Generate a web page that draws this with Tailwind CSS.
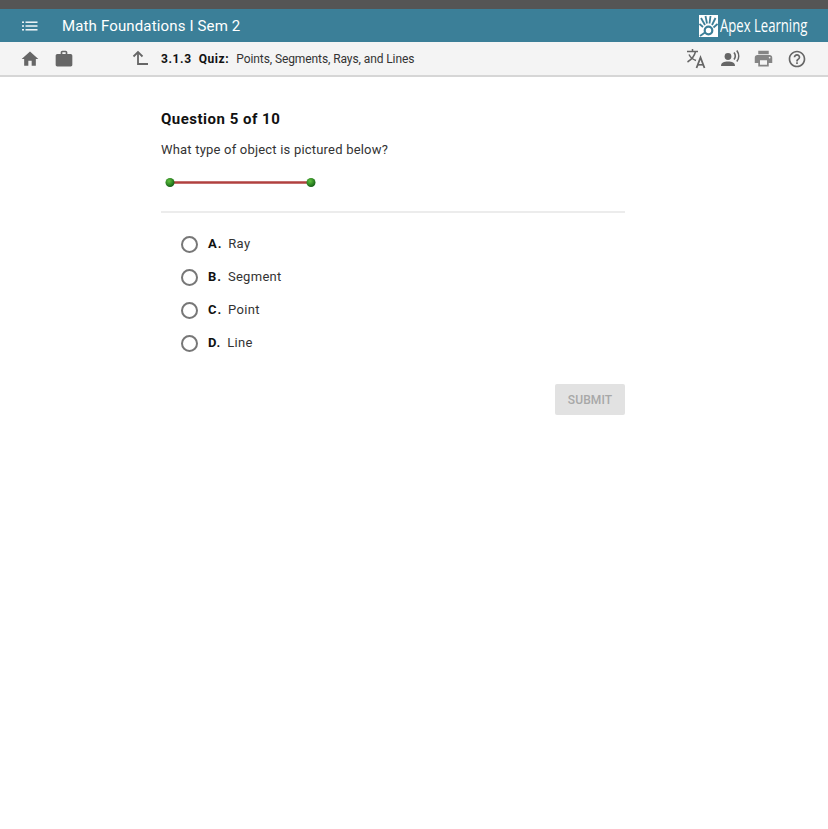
<!DOCTYPE html>
<html lang="en">
<head>
    <meta charset="UTF-8">
    <title>Math Foundations I Sem 2</title>
    <script src="https://cdn.jsdelivr.net/npm/@tailwindcss/browser@4"></script>
</head>
<body class="bg-white text-[#333] font-['Roboto',sans-serif] h-[829px] overflow-hidden">
    <div class="h-[9px] bg-[#555]"></div>

    <!-- course bar -->
    <header class="h-[33px] bg-[#3b7f98] text-white flex items-center">
        <button class="w-[60px] pl-[21px] flex">
            <svg width="18" height="18" viewBox="0 0 18 18" fill="white">
                <rect x="1" y="4.500" width="2" height="1.400"/><rect x="4.500" y="4.500" width="12" height="1.400"/>
                <rect x="1" y="8.300" width="2" height="1.400"/><rect x="4.500" y="8.300" width="12" height="1.400"/>
                <rect x="1" y="12.100" width="2" height="1.400"/><rect x="4.500" y="12.100" width="12" height="1.400"/>
            </svg>
        </button>
        <h1 class="pl-[2px] pt-[2px] text-[15px] tracking-[0.15px] font-normal">Math Foundations I Sem 2</h1>
        <div class="ml-auto mr-[20px] flex items-center">
            <svg width="19" height="22" viewBox="0 0 19 22" class="mr-[2px]">
                <rect width="19" height="22" fill="white"/>
                <g stroke="#3b7f98" stroke-width="1.800" fill="none">
                    <path d="M2 3 L6 10"/><path d="M6.500 1 L8 8.500"/><path d="M11.500 1 L10.500 8.500"/><path d="M16.500 3 L13 10"/><path d="M18.500 9 L14.500 12.500"/><path d="M0.500 9 L4 12"/>
                    <circle cx="9.500" cy="15.500" r="3.800" stroke-width="2.200"/>
                    <path d="M1 21 L6 17.500"/>
                </g>
            </svg>
            <span class="text-[19px] leading-none font-['Open_Sans',sans-serif] scale-x-[0.69] origin-left w-[88px] whitespace-nowrap">Apex Learning</span>
        </div>
    </header>

    <!-- toolbar -->
    <nav class="h-[35px] bg-[#f4f4f4] border-b-2 border-[#d6d6d6] flex items-center text-[#666]">
        <svg class="ml-[20px]" width="20" height="20" viewBox="0 0 24 24" fill="currentColor"><path d="M10 20v-6h4v6h5v-8h3L12 3 2 12h3v8z"/></svg>
        <svg class="ml-[14px]" width="20" height="20" viewBox="0 0 24 24" fill="currentColor"><path d="M20 6h-4V4c0-1.100-.9-2-2-2h-4c-1.100 0-2 .9-2 2v2H4c-1.100 0-2 .9-2 2v11c0 1.100.9 2 2 2h16c1.100 0 2-.9 2-2V8c0-1.100-.9-2-2-2zM14 6h-4V4h4v2z"/></svg>
        <svg class="ml-[57px]" width="18" height="18" viewBox="0 0 18 18" fill="none" stroke="currentColor" stroke-width="1.800"><path d="M2.500 6.500 L7 2 L11.500 6.500"/><path d="M7 2.500 V14 H17"/></svg>
        <div class="ml-[12px] flex items-baseline text-[12px] text-[#222]">
            <span class="font-bold tracking-[0.6px] text-[#111]">3.1.3</span>
            <span class="ml-[7px] font-bold tracking-[0.6px] text-[#111]">Quiz:</span>
            <span class="ml-[7px] tracking-[-0.09px] text-[#333]">Points, Segments, Rays, and Lines</span>
        </div>
        <div class="ml-auto mr-[21px] flex items-center gap-[13px]">
            <svg width="21" height="21" viewBox="0 0 21 21" fill="none" stroke="currentColor" stroke-width="1.500"><path d="M1 3.500 H12"/><path d="M6.500 1 V3.500"/><path d="M9.500 3.500 C8.500 8 5.500 11.500 1.500 14"/><path d="M3 6.500 C4.500 9.500 7 11.500 10 12.500"/><path d="M10.500 20 L14.500 9.500 L18.500 20" stroke-width="1.800"/><path d="M11.800 16.800 H17.200" stroke-width="1.600"/></svg>
            <svg width="21" height="21" viewBox="0 0 21 21" fill="currentColor"><circle cx="8" cy="8.500" r="3.400"/><path d="M1 18 C1 14.500 4 13.500 8 13.500 C12 13.500 15 14.500 15 18 Z"/><path d="M14 4.500 C15.500 6.500 15.500 9.500 14 11.500 M16.800 2.500 C19.300 6 19.300 10.500 16.800 13.500" fill="none" stroke="currentColor" stroke-width="1.600"/></svg>
            <svg class="-ml-[1px]" width="21" height="21" viewBox="0 0 24 24" fill="#858585"><path d="M19 8H5c-1.660 0-3 1.340-3 3v6h4v4h12v-4h4v-6c0-1.660-1.340-3-3-3zm-3 11H8v-5h8v5zm3-7c-.55 0-1-.45-1-1s.45-1 1-1 1 .45 1 1-.45 1-1 1zm-1-9H6v4h12V3z"/></svg>
            <svg width="20" height="20" viewBox="0 0 24 24" fill="currentColor"><path d="M11 18h2v-2h-2v2zm1-16C6.480 2 2 6.480 2 12s4.480 10 10 10 10-4.480 10-10S17.520 2 12 2zm0 18c-4.410 0-8-3.590-8-8s3.590-8 8-8 8 3.590 8 8-3.590 8-8 8zm0-14c-2.210 0-4 1.790-4 4h2c0-1.100.9-2 2-2s2 .9 2 2c0 2-3 1.750-3 5h2c0-2.250 3-2.500 3-5 0-2.210-1.790-4-4-4z"/></svg>
        </div>
    </nav>

    <!-- question -->
    <main class="w-[464px] ml-[161px] pt-[32px]">
        <h2 class="text-[15px] leading-[20px] font-bold tracking-[0.5px] text-[#111]">Question 5 of 10</h2>
        <p class="mt-[11px] text-[13px] leading-[20px] tracking-[0.2px] text-[#333]">What type of object is pictured below?</p>

        <svg class="mt-[11px] block" width="165" height="24" viewBox="0 0 165 24">
            <defs>
                <radialGradient id="dot" cx="40%" cy="35%" r="70%">
                    <stop offset="0%" stop-color="#5fc33f"/>
                    <stop offset="100%" stop-color="#0f5a12"/>
                </radialGradient>
            </defs>
            <line x1="9" y1="11.500" x2="150" y2="11.500" stroke="#b0403f" stroke-width="2.600"/>
            <circle cx="9" cy="11.500" r="4.500" fill="url(#dot)"/>
            <circle cx="150" cy="11.500" r="4.500" fill="url(#dot)"/>
        </svg>

        <div class="mt-[16px] border-t-2 border-[#ececec]"></div>

        <ul class="mt-[14px] pl-[20px]">
            <li class="h-[33px] flex items-center"><span class="w-[17px] h-[17px] rounded-full border-2 border-[#777] mt-[1px]"></span><b class="ml-[10px] text-[13px] font-bold text-[#111] tracking-[0.9px]">A.</b><span class="ml-[6px] text-[13px] tracking-[0.3px]">Ray</span></li>
            <li class="h-[33px] flex items-center"><span class="w-[17px] h-[17px] rounded-full border-2 border-[#777] mt-[1px]"></span><b class="ml-[10px] text-[13px] font-bold text-[#111] tracking-[0.9px]">B.</b><span class="ml-[6px] text-[13px] tracking-[0.3px]">Segment</span></li>
            <li class="h-[33px] flex items-center"><span class="w-[17px] h-[17px] rounded-full border-2 border-[#777] mt-[1px]"></span><b class="ml-[10px] text-[13px] font-bold text-[#111] tracking-[0.9px]">C.</b><span class="ml-[6px] text-[13px] tracking-[0.3px]">Point</span></li>
            <li class="h-[33px] flex items-center"><span class="w-[17px] h-[17px] rounded-full border-2 border-[#777] mt-[1px]"></span><b class="ml-[10px] text-[13px] font-bold text-[#111] tracking-[0.9px]">D.</b><span class="ml-[6px] text-[13px] tracking-[0.3px]">Line</span></li>
        </ul>

        <div class="mt-[25px] flex justify-end">
            <button disabled class="w-[70px] h-[31px] rounded-[2px] bg-[#e2e2e2] text-[#a8a8a8] text-[12px] font-medium tracking-[0.1px]">SUBMIT</button>
        </div>
    </main>
</body>
</html>
